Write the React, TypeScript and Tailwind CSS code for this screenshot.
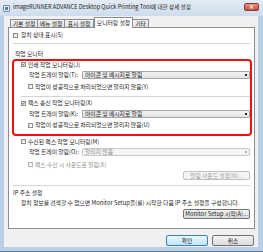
const font = "font-['Noto_Sans_CJK_KR','Noto_Sans',sans-serif]";

function Check({ checked, disabled }: { checked?: boolean; disabled?: boolean }) {
  return (
    <span
      className={`flex h-[5px] w-[5px] shrink-0 items-center justify-center border ${
        disabled ? "border-[#b4b4b4] bg-[#f4f4f4]" : "border-[#8e8f8f] bg-gradient-to-br from-[#dcdcdc] to-[#fbfbfb]"
      }`}
    >
      {checked && (
        <svg viewBox="0 0 6 6" className="h-[5px] w-[5px]">
          <path d="M0.8 3l1.4 1.5L5.2 1" fill="none" stroke="#1d1d1d" strokeWidth="1.3" />
        </svg>
      )}
    </span>
  );
}

function Select({ value, disabled }: { value: string; disabled?: boolean }) {
  return (
    <div
      className={`flex h-[8px] w-[168px] items-center justify-between rounded-[1px] border pl-[2px] pr-[2px] ${
        disabled
          ? "border-[#c8c8c8] bg-[#f4f4f4] text-[#8d8d8d]"
          : "border-[#a5a5a5] bg-gradient-to-b from-[#f3f3f3] to-[#e2e2e2] text-[#222]"
      }`}
    >
      <span className="leading-none">{value}</span>
      <span className={`h-[2px] w-[2px] ${disabled ? "bg-[#b0b0b0]" : "bg-[#222]"}`} />
    </div>
  );
}

function Sep({ className = "" }: { className?: string }) {
  return <div className={`h-px bg-[#d5d5d5] ${className}`} />;
}

function Btn({ label, disabled, primary, w }: { label: string; disabled?: boolean; primary?: boolean; w: string }) {
  return (
    <div
      className={`flex items-center justify-center rounded-[2px] border leading-none ${w} ${
        disabled
          ? "border-[#c0c0c0] bg-[#f4f4f4] text-[#9a9a9a]"
          : primary
            ? "border-[#3c7fb1] bg-gradient-to-b from-[#eaf6fd] to-[#bee6fd] text-[#222]"
            : "border-[#707070] bg-gradient-to-b from-[#f2f2f2] to-[#dcdcdc] text-[#222]"
      }`}
    >
      {label}
    </div>
  );
}

export default function App() {
  const tabs = [
    { t: "기본 설정", w: "w-[28px]" },
    { t: "메뉴 설정", w: "w-[27px]" },
    { t: "표시 설정", w: "w-[29px]" },
  ];
  return (
    <div className={`${font} flex h-[252px] w-[263px] flex-col bg-[#b9cfe6] text-[5.8px] text-[#222]`}>
      {/* title bar */}
      <div className="relative flex h-[16px] items-center bg-gradient-to-b from-[#e4ecf5] to-[#cddcec] pl-[3px]">
        <span className="mr-[3px] flex h-[7px] w-[7px] items-center justify-center rounded-[1px] border border-[#6d8aa8] bg-[#e8f0f8]">
          <span className="h-[3px] w-[3px] bg-[#5a7da3]" />
        </span>
        <span className="text-[5.6px] leading-none text-[#1e1e1e]">
          imageRUNNER ADVANCE Desktop Quick Printing Tool에 대한 상세 설정
        </span>
        <div className="absolute right-[4px] top-[3px] flex h-[8px] w-[15px] items-center justify-center rounded-[2px] border border-[#8c3b2f] bg-gradient-to-b from-[#e4937f] to-[#c4493a]">
          <span className="text-[6px] font-bold leading-none text-white">×</span>
        </div>
      </div>

      {/* client */}
      <div className="ml-[4px] mr-[5px] flex h-[231px] flex-col bg-[#f0f0f0] pl-[4px]">
        {/* tabs */}
        <div className="ml-[2px] mt-[1px] flex h-[10px] items-end">
          {tabs.map((x) => (
            <div
              key={x.t}
              className={`flex h-[8px] ${x.w} items-center justify-center border border-b-0 border-[#898c95] bg-gradient-to-b from-[#f3f3f3] to-[#e3e3e3] leading-none [&+&]:border-l-0`}
            >
              {x.t}
            </div>
          ))}
          <div className="relative z-10 -mb-px flex h-[11px] w-[39px] items-center justify-center border border-b-0 border-[#898c95] bg-white leading-none">
            모니터링 설정
          </div>
          <div className="flex h-[8px] w-[16px] items-center justify-center border border-b-0 border-l-0 border-[#898c95] bg-gradient-to-b from-[#f3f3f3] to-[#e3e3e3] leading-none">
            기타
          </div>
        </div>

        {/* panel */}
        <div className="flex h-[202px] w-[247px] flex-col border border-[#898c95] bg-white pl-[4px] pr-[4px] pt-[2px]">
          <div className="flex h-[10px] items-center gap-[3px]">
            <Check />
            <span className="leading-none">장치 상태 표시(S)</span>
          </div>
          <Sep className="mb-[2px] mt-[3px]" />
          <div className="mt-[3px] flex h-[10px] items-center pl-[2px] leading-none">작업 모니터</div>

          {/* highlighted group */}
          <div className="-ml-[1px] -mr-[2px] flex h-[77px] flex-col rounded-[4px] border-2 border-[#ee1111] pl-[7px]">
            <div className="flex h-[7px] items-center gap-[2px]">
              <Check checked />
              <span className="leading-none">인쇄 작업 모니터링(J)</span>
            </div>
            <div className="mt-[1px] flex h-[11px] items-center">
              <span className="ml-[8px] w-[53px] leading-none">작업 트레이 알림(T):</span>
              <Select value="아이콘 및 메시지로 알림" />
            </div>
            <div className="mt-[1px] flex h-[11px] items-center gap-[2px] pl-[7px]">
              <Check />
              <span className="leading-none">작업이 성공적으로 처리되었으면 알리지 않음(Y)</span>
            </div>
            <Sep className="mt-[4px]" />
            <div className="mt-[1px] flex h-[10px] items-center gap-[2px]">
              <Check checked />
              <span className="leading-none">팩스 송신 작업 모니터링(X)</span>
            </div>
            <div className="flex h-[11px] items-center">
              <span className="ml-[8px] w-[53px] leading-none">작업 트레이 알림(K):</span>
              <Select value="아이콘 및 메시지로 알림" />
            </div>
            <div className="flex h-[12px] items-center gap-[2px] pl-[7px]">
              <Check />
              <span className="leading-none">작업이 성공적으로 처리되었으면 알리지 않음(U)</span>
            </div>
          </div>

          <div className="flex h-[11px] items-center gap-[2px] pl-[8px]">
            <Check />
            <span className="leading-none">수신된 팩스 작업 모니터링(M)</span>
          </div>
          <div className="flex h-[9px] items-center">
            <span className="ml-[16px] w-[53px] leading-none">작업 트레이 알림(O):</span>
            <Select value="알리지 않음" disabled />
          </div>
          <div className="mt-[2px] flex h-[13px] items-center gap-[2px] pl-[15px] text-[#8d8d8d]">
            <Check disabled />
            <span className="leading-none">팩스 수신 시 사운드로 알림(X)</span>
          </div>
          <div className="flex justify-end">
            <Btn label="알림 사운드 설정(N)..." disabled w="h-[9px] w-[67px]" />
          </div>
          <Sep className="mt-[5px]" />
          <div className="mt-[2px] flex h-[10px] items-center leading-none">IP 주소 설정</div>
          <div className="flex h-[9px] items-center pl-[8px] leading-none">
            장치 정보를 검색할 수 없으면 Monitor Setup을(를) 시작한 다음 IP 주소 설정을 구성합니다.
          </div>
          <div className="mt-[2px] flex justify-end">
            <Btn label="Monitor Setup 시작(A)..." w="h-[10px] w-[67px]" />
          </div>
        </div>

        {/* dialog buttons */}
        <div className="mt-[6px] flex justify-end gap-[4px] pr-[4px]">
          <Btn label="확인" primary w="h-[11px] w-[42px]" />
          <Btn label="취소" w="h-[11px] w-[42px]" />
        </div>
      </div>
      <div className="flex-1 border-b border-[#5a7896]" />
    </div>
  );
}
